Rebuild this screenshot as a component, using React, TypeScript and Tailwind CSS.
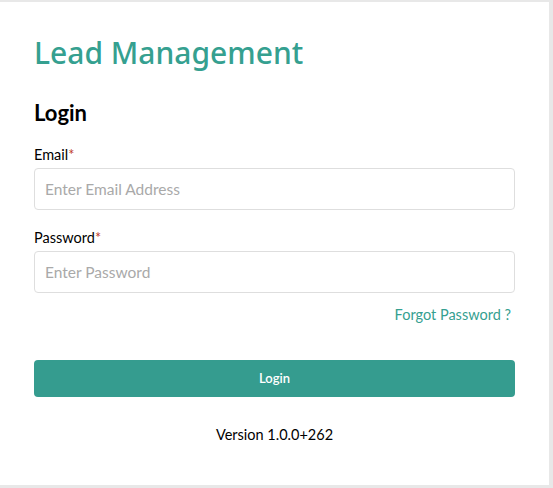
export default function App() {
  return (
    <div className="min-h-[488px] w-[553px] bg-[#e8e8e8] pt-[2px] pr-[4px] pb-[3px]" style={{ fontFamily: "Lato, 'Noto Sans', sans-serif" }}>
      <div className="h-[483px] bg-white px-[34px] pt-[31px]">
        <h1
          className="text-[30px] leading-[40px] font-medium text-[#35a090]"
          style={{ fontFamily: "'Noto Sans', Lato, sans-serif" }}
        >
          Lead Management
        </h1>
        <h2 className="mt-[26px] text-[22px] leading-[28px] font-bold text-black">Login</h2>

        <form className="mt-[18px] flex flex-col">
          <label className="text-[14.5px] leading-[20px] text-black">
            Email<span className="text-[#c0392b]">*</span>
          </label>
          <input
            type="email"
            placeholder="Enter Email Address"
            className="mt-[3px] h-[42px] w-full rounded-[4px] border border-[#dedede] px-[10px] text-[15.5px] placeholder:text-[#a9a9a9] outline-none"
          />

          <label className="mt-[18px] text-[14.5px] leading-[20px] text-black">
            Password<span className="text-[#c0392b]">*</span>
          </label>
          <input
            type="password"
            placeholder="Enter Password"
            className="mt-[3px] h-[42px] w-full rounded-[4px] border border-[#dedede] px-[10px] text-[15.5px] placeholder:text-[#a9a9a9] outline-none"
          />

          <div className="mt-[12px] flex justify-end pr-[4px]">
            <a className="text-[14.5px] leading-[20px] text-[#35a090]">Forgot Password ?</a>
          </div>

          <button
            type="button"
            className="mt-[35px] h-[37px] w-full rounded-[4px] bg-[#359c8f] text-[13px] font-semibold text-white"
          >
            Login
          </button>

          <p className="mt-[28px] text-center text-[14.5px] leading-[20px] text-black">Version 1.0.0+262</p>
        </form>
      </div>
    </div>
  );
}
